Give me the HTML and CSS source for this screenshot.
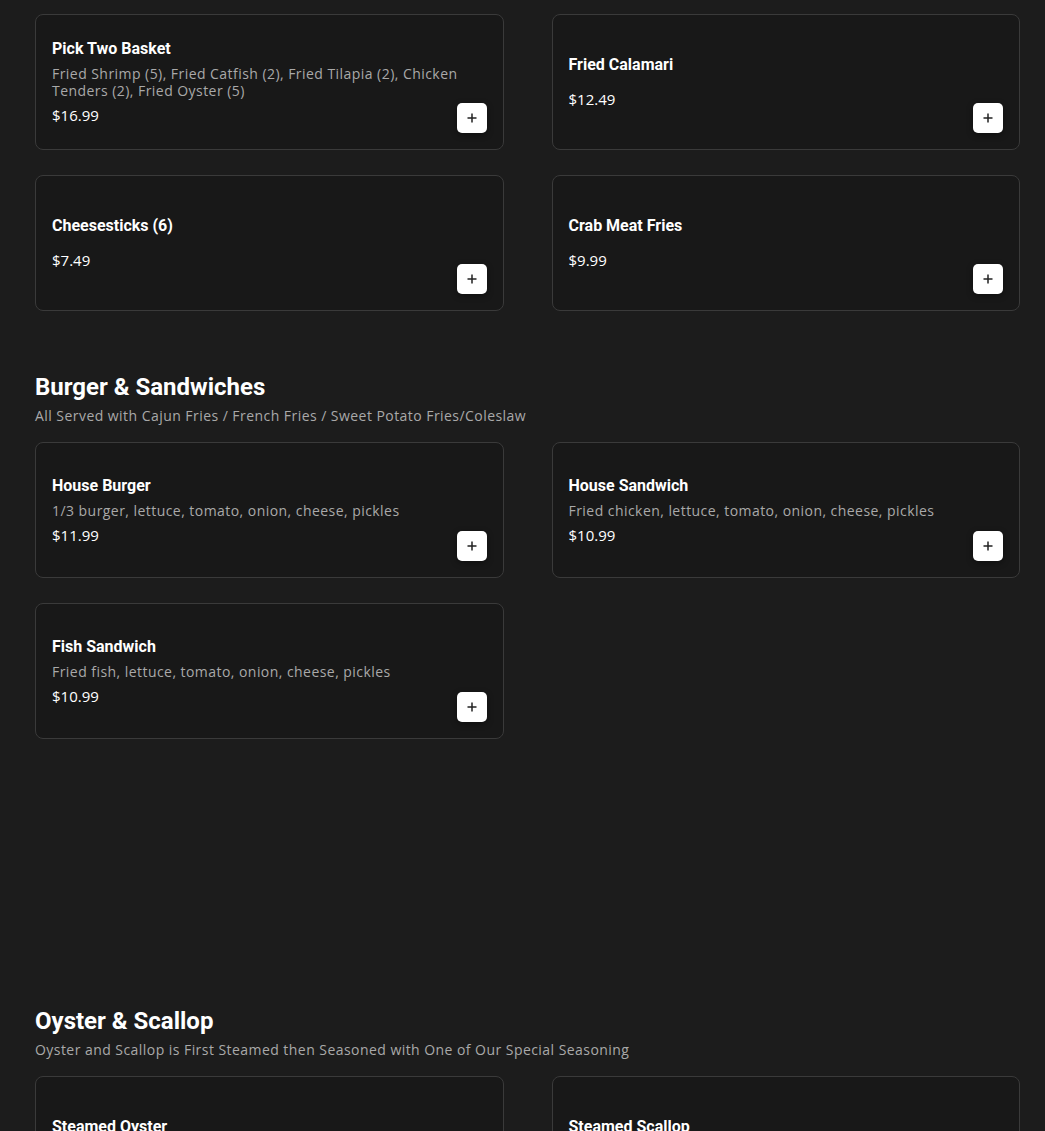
FILE: index.html
```html
<!DOCTYPE html>
<html lang="en">
<head>
  <meta charset="UTF-8">
  <meta name="viewport" content="width=device-width, initial-scale=1.0">
  <title>Menu</title>
  <link rel="stylesheet" href="styles.css">
</head>
<body>
  <main class="menu">
    <section class="section first">
      <div class="grid">
        <div class="card">
          <div class="info">
            <h3>Pick Two Basket</h3>
            <p class="desc">Fried Shrimp (5), Fried Catfish (2), Fried Tilapia (2), Chicken Tenders (2), Fried Oyster (5)</p>
            <div class="price">$16.99</div>
          </div>
          <button class="add" aria-label="Add"><svg viewBox="0 0 12 12" width="12" height="12"><path d="M6 1.5v9M1.5 6h9" stroke="#222" stroke-width="1.5" fill="none"/></svg></button>
        </div>
        <div class="card">
          <div class="info">
            <h3>Fried Calamari</h3>
            <div class="price solo">$12.49</div>
          </div>
          <button class="add" aria-label="Add"><svg viewBox="0 0 12 12" width="12" height="12"><path d="M6 1.5v9M1.5 6h9" stroke="#222" stroke-width="1.5" fill="none"/></svg></button>
        </div>
        <div class="card">
          <div class="info">
            <h3>Cheesesticks (6)</h3>
            <div class="price solo">$7.49</div>
          </div>
          <button class="add" aria-label="Add"><svg viewBox="0 0 12 12" width="12" height="12"><path d="M6 1.5v9M1.5 6h9" stroke="#222" stroke-width="1.5" fill="none"/></svg></button>
        </div>
        <div class="card">
          <div class="info">
            <h3>Crab Meat Fries</h3>
            <div class="price solo">$9.99</div>
          </div>
          <button class="add" aria-label="Add"><svg viewBox="0 0 12 12" width="12" height="12"><path d="M6 1.5v9M1.5 6h9" stroke="#222" stroke-width="1.5" fill="none"/></svg></button>
        </div>
      </div>
    </section>

    <section class="section">
      <h2>Burger &amp; Sandwiches</h2>
      <p class="sub">All Served with Cajun Fries / French Fries / Sweet Potato Fries/Coleslaw</p>
      <div class="grid">
        <div class="card">
          <div class="info">
            <h3>House Burger</h3>
            <p class="desc">1/3 burger, lettuce, tomato, onion, cheese, pickles</p>
            <div class="price">$11.99</div>
          </div>
          <button class="add" aria-label="Add"><svg viewBox="0 0 12 12" width="12" height="12"><path d="M6 1.5v9M1.5 6h9" stroke="#222" stroke-width="1.5" fill="none"/></svg></button>
        </div>
        <div class="card">
          <div class="info">
            <h3>House Sandwich</h3>
            <p class="desc">Fried chicken, lettuce, tomato, onion, cheese, pickles</p>
            <div class="price">$10.99</div>
          </div>
          <button class="add" aria-label="Add"><svg viewBox="0 0 12 12" width="12" height="12"><path d="M6 1.5v9M1.5 6h9" stroke="#222" stroke-width="1.5" fill="none"/></svg></button>
        </div>
        <div class="card">
          <div class="info">
            <h3>Fish Sandwich</h3>
            <p class="desc">Fried fish, lettuce, tomato, onion, cheese, pickles</p>
            <div class="price">$10.99</div>
          </div>
          <button class="add" aria-label="Add"><svg viewBox="0 0 12 12" width="12" height="12"><path d="M6 1.5v9M1.5 6h9" stroke="#222" stroke-width="1.5" fill="none"/></svg></button>
        </div>
      </div>
    </section>

    <section class="section tall">
      <h2>Oyster &amp; Scallop</h2>
      <p class="sub">Oyster and Scallop is First Steamed then Seasoned with One of Our Special Seasoning</p>
      <div class="grid">
        <div class="card">
          <div class="info">
            <h3>Steamed Oyster</h3>
            <div class="price solo">$14.99</div>
          </div>
          <button class="add" aria-label="Add"><svg viewBox="0 0 12 12" width="12" height="12"><path d="M6 1.5v9M1.5 6h9" stroke="#222" stroke-width="1.5" fill="none"/></svg></button>
        </div>
        <div class="card">
          <div class="info">
            <h3>Steamed Scallop</h3>
            <div class="price solo">$16.99</div>
          </div>
          <button class="add" aria-label="Add"><svg viewBox="0 0 12 12" width="12" height="12"><path d="M6 1.5v9M1.5 6h9" stroke="#222" stroke-width="1.5" fill="none"/></svg></button>
        </div>
      </div>
    </section>
  </main>
</body>
</html>
```

FILE: styles.css
```css
* { margin:0; padding:0; box-sizing:border-box; }
body { background:#1c1c1c; color:#fff; font-family:'Open Sans', sans-serif; overflow:hidden; }
.menu { padding:14px 25px 0 35px; }
.section { margin-top:62px; }
.section.first { margin-top:0; }
.section.tall { margin-top:268px; }
h2 { font-family:Roboto, sans-serif; font-weight:700; font-size:24px; line-height:28px; color:#fff; }
.sub { font-size:14px; line-height:20px; color:#a9a9a9; margin-top:5px; letter-spacing:0.45px; }
.section h2 + .sub + .grid { margin-top:16px; }
/* cards */
.grid { display:grid; grid-template-columns:1fr 1fr; column-gap:48px; row-gap:25px; }
.card { background:#181818; border:1px solid #3a3a3a; border-radius:8px; min-height:136px; padding:16px; display:grid; grid-template-areas:"cell"; }
.info { grid-area:cell; align-self:center; padding-right:10px; }
.card h3 { font-family:Roboto, sans-serif; font-weight:700; font-size:16px; line-height:20px; color:#fff; }
.desc { font-size:14px; line-height:17px; color:#a9a9a9; margin-top:6px; letter-spacing:0.45px; }
.price { font-size:15px; line-height:20px; color:#fff; margin-top:6px; }
.price.solo { margin-top:14px; }
.add { grid-area:cell; align-self:end; justify-self:end; width:30px; height:30px; background:#fff; border:none; border-radius:5px; display:flex; align-items:center; justify-content:center; box-shadow:0 2px 6px rgba(0,0,0,0.4); cursor:pointer; }
```
